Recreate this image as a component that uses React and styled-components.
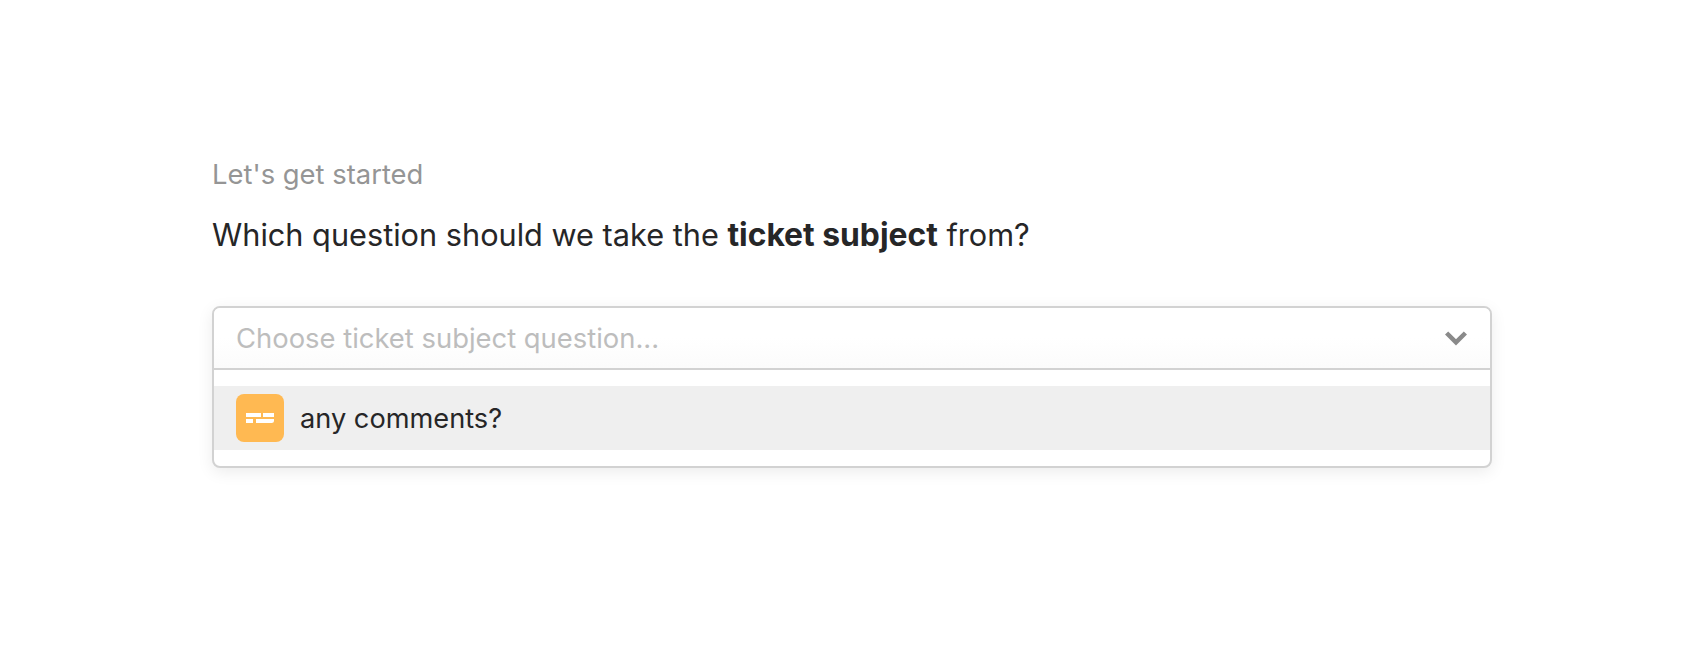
import React from "react";
import styled, { createGlobalStyle } from "styled-components";

const Global = createGlobalStyle`
  html, body { margin: 0; padding: 0; background: #fff; }
  body { font-family: Inter, "Liberation Sans", sans-serif; color: #262627; }
`;

const Page = styled.main`
  width: 1704px;
  height: 648px;
  box-sizing: border-box;
  padding: 157px 212px 0 212px;
  overflow: hidden;
`;

const Eyebrow = styled.div`
  font-size: 27.4px;
  line-height: 34px;
  color: #959595;
`;

const Question = styled.h1`
  margin: 23px 0 0;
  font-size: 30.7px;
  line-height: 42px;
  font-weight: 400;
  color: #262627;
  strong { font-weight: 700; font-size: 31.8px; }
`;

const Dropdown = styled.div`
  margin-top: 50px;
  border: 2px solid #d2d2d2;
  border-radius: 8px;
  background: #fff;
  box-shadow: 0 4px 16px rgba(0, 0, 0, 0.08);
  overflow: hidden;
`;

const Trigger = styled.div`
  height: 60px;
  padding: 0 22px;
  display: flex;
  align-items: center;
  justify-content: space-between;
  background: linear-gradient(#fff 50%, #fbfbfb);
  border-bottom: 2px solid #d2d2d2;
`;

const Placeholder = styled.span`
  font-size: 27.4px;
  color: #bdbdbd;
`;

const Chevron = styled.svg`
  width: 24px;
  height: 16px;
  display: block;
`;

const List = styled.div`
  padding: 16px 0;
`;

const Option = styled.div`
  height: 64px;
  padding: 0 22px;
  display: flex;
  align-items: center;
  gap: 16px;
  background: #efefef;
  font-size: 27.2px;
  color: #262627;
`;

const Badge = styled.span`
  width: 48px;
  height: 48px;
  border-radius: 8px;
  background: #ffb952;
  flex: none;
  display: flex;
  align-items: center;
  justify-content: center;
`;

export default function App() {
  return (
    <>
      <Global />
      <Page>
        <Eyebrow>Let's get started</Eyebrow>
        <Question>
          Which question should we take the <strong>ticket subject</strong> from?
        </Question>
        <Dropdown>
          <Trigger>
            <Placeholder>Choose ticket subject question...</Placeholder>
            <Chevron viewBox="0 0 24 16" aria-hidden="true">
              <path d="M2.6 3 L12 12.4 L21.4 3" fill="none" stroke="#8a8a8a" strokeWidth="4.5" />
            </Chevron>
          </Trigger>
          <List>
            <Option>
              <Badge>
                <svg width="28" height="10" viewBox="0 0 28 10" aria-hidden="true">
                  <path d="M0 0h15v4H0zM17 0h11v4H17zM0 6h7v4H0zM10 6h18v1.5a2.5 2.5 0 0 1-2.5 2.5H10z" fill="#fff" />
                </svg>
              </Badge>
              any comments?
            </Option>
          </List>
        </Dropdown>
      </Page>
    </>
  );
}
